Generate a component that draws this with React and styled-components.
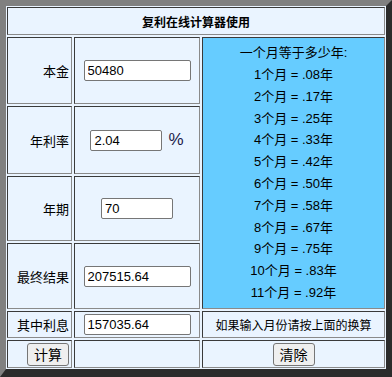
import React from "react";
import styled, { createGlobalStyle } from "styled-components";

const GlobalStyle = createGlobalStyle`
  body {
    margin: 0;
    background: #ffffff;
    font-family: "Liberation Sans", "Noto Sans CJK SC", sans-serif;
  }
`;

const Board = styled.div`
  box-sizing: border-box;
  width: 392px;
  height: 377px;
  display: grid;
  grid-template-columns: 65px 126px 183px;
  grid-template-rows: 28px 67px 68px 65px 66px 27px 28px;
  gap: 2px;
  padding: 1px;
  background: #eaf4ff;
  border-style: solid;
  border-width: 6px 6px 8px 6px;
  border-color: #808080 #2b2b2b #2b2b2b #808080;
`;

const Cell = styled.div`
  box-sizing: border-box;
  display: flex;
  align-items: center;
  justify-content: ${(p) => p.$align || "center"};
  padding: 0 1px;
  border: 1px solid;
  border-color: #3a3a3a #8a8a8a #8a8a8a #3a3a3a;
  background: ${(p) => (p.$blue ? "#66ccff" : "#eaf4ff")};
  grid-column: ${(p) => p.$col || "auto"};
  grid-row: ${(p) => p.$row || "auto"};
  font-size: 13px;
  color: #000;
`;

const Title = styled(Cell)`
  font-size: 12px;
  font-weight: bold;
`;

const Label = styled(Cell)`
  padding-right: 2px;
`;

const Field = styled.input`
  box-sizing: border-box;
  width: ${(p) => p.$w}px;
  height: 21px;
  padding: 1px 3px;
  border: 1px solid #767676;
  border-radius: 2px;
  background: #fff;
  font-family: "Liberation Sans", "Noto Sans CJK SC", sans-serif;
  font-size: 13px;
  color: #000;
`;

const Percent = styled.span`
  margin-left: 6px;
  font-size: 17px;
  color: #1c1c4a;
`;

const Table = styled.div`
  text-align: center;
  line-height: 21.8px;
  font-size: 13px;
`;

const Note = styled(Cell)`
  font-size: 12px;
`;

const Button = styled.button`
  box-sizing: border-box;
  height: 23px;
  padding: 0 6px;
  border: 1px solid #767676;
  border-radius: 3px;
  background: #efefef;
  font-family: "Liberation Sans", "Noto Sans CJK SC", sans-serif;
  font-size: 14px;
  color: #000;
`;

const months = [".08", ".17", ".25", ".33", ".42", ".50", ".58", ".67", ".75", ".83", ".92"];

export default function App() {
  return (
    <>
      <GlobalStyle />
      <Board>
        <Title $col="1 / 4">复利在线计算器使用</Title>

        <Label $align="flex-end">本金</Label>
        <Cell>
          <Field $w={107} defaultValue="50480" />
        </Cell>
        <Cell $blue $col="3" $row="2 / 6">
          <Table>
            <div>一个月等于多少年:</div>
            {months.map((v, i) => (
              <div key={i}>
                {i + 1}个月 = {v}年
              </div>
            ))}
          </Table>
        </Cell>

        <Label $align="flex-end">年利率</Label>
        <Cell>
          <Field $w={72} defaultValue="2.04" />
          <Percent>%</Percent>
        </Cell>

        <Label $align="flex-end">年期</Label>
        <Cell>
          <Field $w={72} defaultValue="70" />
        </Cell>

        <Label $align="flex-end">最终结果</Label>
        <Cell>
          <Field $w={107} defaultValue="207515.64" />
        </Cell>

        <Label $align="flex-end">其中利息</Label>
        <Cell>
          <Field $w={107} defaultValue="157035.64" />
        </Cell>
        <Note>如果输入月份请按上面的换算</Note>

        <Label $align="flex-end">
          <Button>计算</Button>
        </Label>
        <Cell />
        <Cell>
          <Button>清除</Button>
        </Cell>
      </Board>
    </>
  );
}
